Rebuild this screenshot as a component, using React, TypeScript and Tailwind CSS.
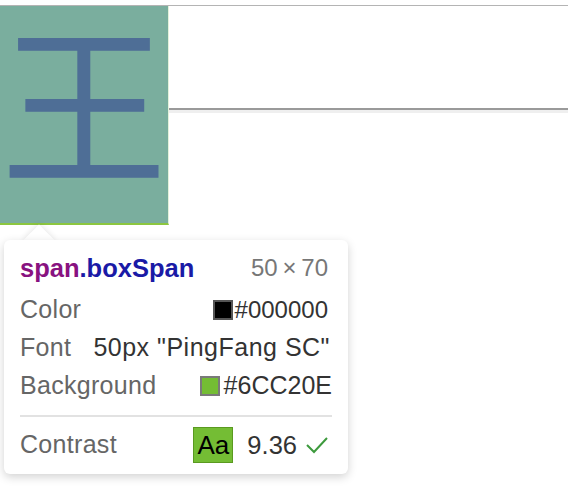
import React from "react";

export default function App() {
  return (
    <div className="relative w-[568px] h-[504px] bg-white overflow-hidden font-['Liberation_Sans',Arial,sans-serif]">
      <div className="h-[5px]" />
      <div className="h-px bg-[#b4b4b4]" />
      <div className="flex">
        <div className="w-[169px] h-[219px] bg-[#7aae9e] border-b-[2px] border-r border-b-[#8cc63f] border-r-[#e4f1da] flex items-start justify-center">
          <span className="block text-[160px] leading-none text-[#4e6e96] font-['Noto_Sans_CJK_SC',sans-serif] mt-[10px] scale-x-[1.037] scale-y-[1.069]">
            王
          </span>
        </div>
        <div className="flex-1 pt-[102px]">
          <div className="h-[2px] bg-[#9a9a9a]" />
          <div className="h-[3px] bg-[#efefef]" />
        </div>
      </div>

      {/* tooltip arrow */}
      <div className="absolute left-[28px] top-[229px] w-[22px] h-[22px] rotate-45 bg-white shadow-[0_0_6px_rgba(0,0,0,0.12)]" />

      {/* tooltip */}
      <div className="absolute left-[4px] top-[240px] w-[344px] bg-white rounded-[6px] shadow-[0_3px_10px_rgba(0,0,0,0.18)] px-[16px] pt-[12px] pb-[9px] text-[25px]">
        <div className="flex justify-between items-center h-[32px] pr-[4px]">
          <span className="font-bold text-[25.5px]">
            <span className="text-[#881280]">span</span>
            <span className="text-[#1a1aa6]">.boxSpan</span>
          </span>
          <span className="text-[#777] text-[24px]">50{"\u2009"}×{"\u2009"}70</span>
        </div>
        <div className="mt-[7px] flex justify-between items-center h-[38px] pr-[4px]">
          <span className="text-[#666] tracking-[0.3px]">Color</span>
          <span className="flex items-center text-[#333] text-[24px]">
            <span className="w-[20px] h-[20px] bg-black border-2 border-[#555] mr-[2px]" />
            #000000
          </span>
        </div>
        <div className="flex justify-between items-center h-[38px] pr-[2px]">
          <span className="text-[#666] tracking-[0.3px]">Font</span>
          <span className="text-[#333] tracking-[0.5px]">50px "PingFang SC"</span>
        </div>
        <div className="flex justify-between items-center h-[38px]">
          <span className="text-[#666] tracking-[0.3px]">Background</span>
          <span className="flex items-center text-[#333]">
            <span className="w-[20px] h-[20px] bg-[#74bd34] border-2 border-[#7a7a7a] mr-[4px]" />
            #6CC20E
          </span>
        </div>
        <div className="mt-[10px] h-[2px] bg-[#e2e2e2]" />
        <div className="mt-[8px] flex justify-between items-center h-[40px] pr-[4px]">
          <span className="text-[#666] tracking-[0.3px]">Contrast</span>
          <span className="flex items-center text-[#333]">
            <span className="w-[40px] h-[36px] bg-[#74bd34] border border-[#5a9a20] text-black text-[26px] flex items-center justify-center">
              Aa
            </span>
            <span className="ml-[14px] text-[25.5px]">9.36</span>
            <svg className="ml-[9px]" width="22" height="18" viewBox="0 0 22 18">
              <polyline points="1,9 8,16 21,2" fill="none" stroke="#3d9a3d" strokeWidth="2" />
            </svg>
          </span>
        </div>
      </div>
    </div>
  );
}
